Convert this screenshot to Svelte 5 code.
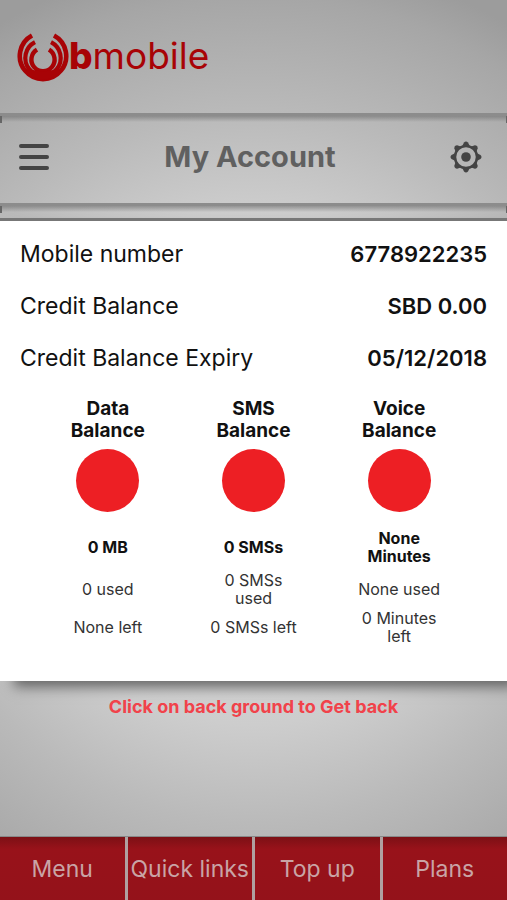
<script lang="ts">
	const details = [
		{ label: 'Mobile number', value: '6778922235' },
		{ label: 'Credit Balance', value: 'SBD 0.00' },
		{ label: 'Credit Balance Expiry', value: '05/12/2018' }
	];

	const balances = [
		{ name: 'Data', total: '0 MB', used: '0 used', left: 'None left' },
		{ name: 'SMS', total: '0 SMSs', used: '0 SMSs used', left: '0 SMSs left' },
		{ name: 'Voice', total: 'None Minutes', used: 'None used', left: '0 Minutes left' }
	];

	const tabs = ['Menu', 'Quick links', 'Top up', 'Plans'];

	// eight gear teeth, one every 45 degrees
	const teeth = [0, 45, 90, 135, 180, 225, 270, 315];
</script>

<div class="screen">
	<header class="brand">
		<svg class="mark" viewBox="0 0 52 52" aria-hidden="true">
			<g fill="none" stroke="#a80306">
				<path d="M15 5.500A23.200 23.200 0 1 0 37 5.500" stroke-width="4.600" />
				<path d="M18 12.200A17.700 17.700 0 1 0 34 12.200" stroke-width="4.200" />
				<path d="M20 19.700A11.600 11.600 0 1 0 32 19.700" stroke-width="4.400" />
			</g>
			<path d="M8 38Q15 41 20 40Q26 43 32 40Q37 41 44 38Q37 50 26 50Q15 50 8 38Z" fill="#a80306" />
		</svg>
		<span class="wordmark"><b>b</b>mobile</span>
	</header>

	<div class="title-bar ledge">
		<button class="icon-btn" aria-label="Open menu">
			<svg viewBox="0 0 32 32" width="32" height="32">
				<path d="M3 5H29M3 16H29M3 27H29" stroke="#444" stroke-width="4" stroke-linecap="round" />
			</svg>
		</button>
		<h1>My Account</h1>
		<button class="icon-btn" aria-label="Settings">
			<svg viewBox="0 0 32 32" width="32" height="32">
				<circle cx="16" cy="16" r="11" fill="none" stroke="#444" stroke-width="2.500" />
				<circle cx="16" cy="16" r="4.800" fill="#444" />
				{#each teeth as angle}
					<path d="M12 5.500L14 1.500Q16 -0.500 18 1.500L20 5.500Z" fill="#444" transform="rotate({angle} 16 16)" />
				{/each}
			</svg>
		</button>
	</div>

	<div class="card-wrap ledge">
		<main class="card">
			<dl class="details">
				{#each details as row}
					<div class="row">
						<dt>{row.label}</dt>
						<dd>{row.value}</dd>
					</div>
				{/each}
			</dl>
			<div class="balances">
				{#each balances as item}
					<section class="balance">
						<h2>{item.name} Balance</h2>
						<div class="dot"></div>
						<strong>{item.total}</strong>
						<p>{item.used}</p>
						<p>{item.left}</p>
					</section>
				{/each}
			</div>
		</main>
	</div>

	<button class="back">Click on back ground to Get back</button>

	<nav class="tabs">
		{#each tabs as tab}
			<a href="#{tab.toLowerCase().replace(' ', '-')}">{tab}</a>
		{/each}
	</nav>
</div>

<style>
	:global(body) {
		margin: 0;
	}

	.screen {
		min-height: 100vh;
		display: flex;
		flex-direction: column;
		background: radial-gradient(ellipse 100% 57% at 50% 52%, #d6d6d6 30%, #cdcdcd 50%, #bababa 69%, #a6a6a6 92%, #9c9c9c 100%);
		font-family: Inter, 'Liberation Sans', sans-serif;
		color: #111;
	}

	.brand {
		height: 113px;
		box-sizing: border-box;
		padding: 0 17px 2px;
		display: flex;
		align-items: center;
		color: #a80306;
	}

	.mark {
		width: 52px;
		height: 52px;
	}

	.wordmark {
		font-size: 37px;
		line-height: 40px;
		font-weight: 400;
	}

	.wordmark b {
		font-weight: 800;
	}

	/* bevelled top edge with a short dark tick at both ends */
	.ledge {
		border-top: 3px solid #8c8c8c;
		background:
			linear-gradient(#666, #666) 0 0 / 2px 7px no-repeat,
			linear-gradient(#666, #666) 100% 0 / 1px 7px no-repeat,
			linear-gradient(rgba(110, 110, 110, 0.6), rgba(110, 110, 110, 0)) 0 0 / 100% 6px no-repeat;
	}

	.title-bar {
		height: 90px;
		padding: 0 25px 6px 18px;
		display: flex;
		align-items: center;
		justify-content: space-between;
		box-sizing: border-box;
	}

	h1 {
		margin: 0;
		font-size: 29px;
		line-height: 36px;
		font-weight: 700;
		color: #606060;
	}

	.icon-btn {
		width: 32px;
		height: 32px;
		padding: 0;
		border: none;
		background: none;
		cursor: pointer;
	}

	.icon-btn svg {
		display: block;
	}

	.card-wrap {
		padding-top: 12px;
	}

	.card {
		padding: 17px 20px 35px;
		border-top: 3px solid #777;
		background: #fff;
		box-shadow: 12px 8px 12px -2px #666;
	}

	.details {
		margin: 0;
		display: grid;
		gap: 20px;
	}

	.row {
		display: flex;
		justify-content: space-between;
		font-size: 23px;
		line-height: 32px;
	}

	dd {
		margin: 0;
		font-size: 22px;
		font-weight: 600;
	}

	.balances {
		padding: 24px 15px 0;
		display: grid;
		grid-template-columns: repeat(3, 1fr);
	}

	.balance {
		display: flex;
		flex-direction: column;
		align-items: center;
		text-align: center;
	}

	h2 {
		width: 90px;
		margin: 0 0 7px;
		font-size: 19px;
		line-height: 22px;
		font-weight: 700;
	}

	.dot {
		width: 63px;
		height: 63px;
		margin-bottom: 16px;
		border-radius: 50%;
		background: #ed1f24;
	}

	.balance strong,
	.balance p {
		width: 90px;
		min-height: 38px;
		margin: 0;
		display: flex;
		align-items: center;
		justify-content: center;
		font-size: 16px;
		line-height: 18px;
	}

	.balance strong {
		margin-bottom: 4px;
	}

	.balance p {
		color: #333;
	}

	.back {
		margin: 12px auto 0;
		padding: 4px;
		border: none;
		background: none;
		font: 700 18px/20px Inter, sans-serif;
		color: #f1424a;
		cursor: pointer;
	}

	.tabs {
		margin-top: auto;
		height: 63px;
		display: grid;
		grid-template-columns: repeat(4, 1fr);
		gap: 3px;
		border-top: 1px solid #888;
		background: #b0a0a0;
	}

	.tabs a {
		display: flex;
		align-items: center;
		justify-content: center;
		background: linear-gradient(#7c1015, #98121a 12px, #94121a);
		color: #c9a4a6;
		font-size: 23px;
		line-height: 30px;
		text-decoration: none;
		white-space: nowrap;
	}
</style>
